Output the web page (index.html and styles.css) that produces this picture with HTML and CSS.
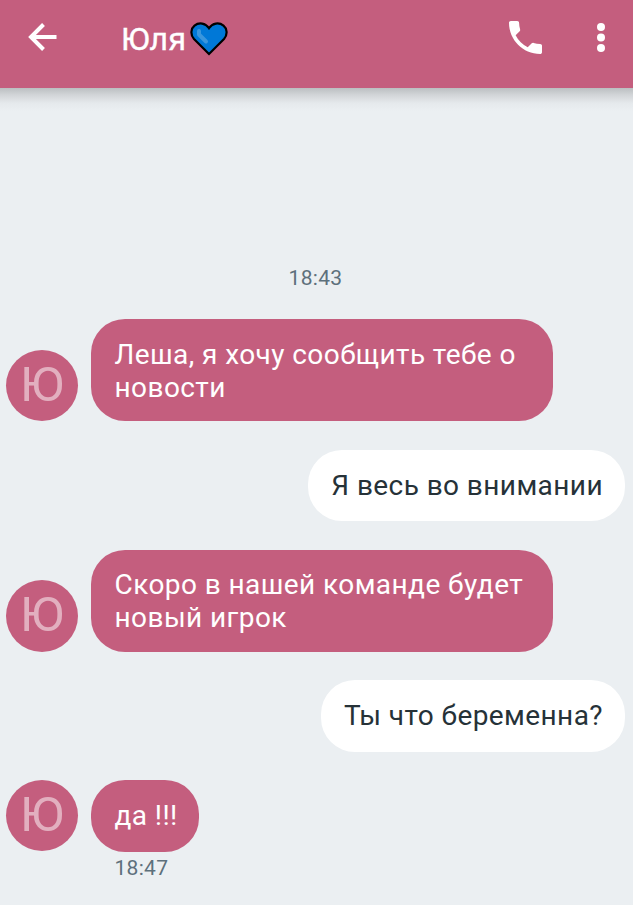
FILE: index.html
```html
<!DOCTYPE html>
<html lang="ru">
<head>
    <meta charset="UTF-8">
    <meta name="viewport" content="width=device-width, initial-scale=1.0">
    <title>Юля</title>
    <link rel="stylesheet" href="styles.css">
</head>
<body>
    <header class="header">
        <svg class="back" viewBox="0 0 30 30">
            <path d="M28.500 15H3M15.500 2.500L3 15l12.500 12.500" fill="none" stroke="#fff" stroke-width="4"/>
        </svg>
        <h1 class="name">Юля</h1>
        <svg class="heart" viewBox="0 0 38 34">
            <path d="M19 32L4 17C0 12.500 1 6.500 4.500 3.700C9 0 15.500 1 19 6.200C22.500 1 29 0 33.500 3.700C37 6.500 38 12.500 34 17Z" fill="#0078d7" stroke="#000" stroke-width="2.200"/>
            <path d="M9 9v3.500l7 7" fill="none" stroke="#3a96dd" stroke-width="4" stroke-linecap="round" stroke-linejoin="round"/>
        </svg>
        <svg class="phone" viewBox="3 3 18 18">
            <path fill="#fff" d="M6.620 10.790c1.440 2.830 3.760 5.140 6.590 6.590l2.200-2.200c.27-.27.67-.36 1.020-.24 1.120.37 2.330.57 3.570.57.55 0 1 .45 1 1V20c0 .55-.45 1-1 1-9.390 0-17-7.610-17-17 0-.55.45-1 1-1h3.500c.55 0 1 .45 1 1 0 1.250.2 2.450.57 3.570.11.35.03.74-.25 1.020l-2.200 2.200z"/>
        </svg>
        <svg class="more" viewBox="0 0 8 29">
            <g fill="#fff">
                <circle cx="4" cy="4" r="4"/>
                <circle cx="4" cy="14.500" r="4"/>
                <circle cx="4" cy="25" r="4"/>
            </g>
        </svg>
    </header>

    <main class="chat">
        <div class="date">18:43</div>
        <div class="row">
            <div class="avatar short">Ю</div>
            <div class="bubble in">Леша, я хочу сообщить тебе о новости</div>
        </div>
        <div class="row right">
            <div class="bubble out">Я весь во внимании</div>
        </div>
        <div class="row third">
            <div class="avatar">Ю</div>
            <div class="bubble in">Скоро в нашей команде будет новый игрок</div>
        </div>
        <div class="row right fourth">
            <div class="bubble out tall">Ты что беременна?</div>
        </div>
        <div class="row last">
            <div class="avatar short">Ю</div>
            <div class="bubble in tall">да !!!</div>
        </div>
        <div class="time">18:47</div>
    </main>
</body>
</html>
```
FILE: styles.css
```css
* {
    box-sizing: border-box;
}
body {
    margin: 0;
    height: 905px;
    overflow: hidden;
    background-color: #ebeff2;
    font-family: Roboto, sans-serif;
}
.header {
    display: flex;
    align-items: center;
    height: 88px;
    padding: 0 28px 14px;
    background-color: #c45e7e;
    color: #fff;
}
.back {
    width: 30px;
    height: 30px;
    margin-right: 63px;
}
.name {
    margin: 4px 0 0;
    font-size: 32px;
    font-weight: 400;
    line-height: 38px;
    letter-spacing: 0.3px;
    -webkit-text-stroke: 0.4px #fff;
}
.heart {
    width: 38px;
    height: 34px;
    margin: 3px 0 0 3.500px;
}
.phone {
    width: 33px;
    height: 33px;
    margin: 0 55px 0 auto;
}
.more {
    width: 8px;
    height: 29px;
}
.chat {
    height: 817px;
    padding: 176px 8px 0 6px;
    /* shadow under the header */
    background: linear-gradient(#bbbfc1, #d2d5d8 7px, #e5e9ec 15px, #ebeff2 23px);
}
.date,
.time {
    font-size: 21px;
    line-height: 28px;
    letter-spacing: 0.3px;
    color: #5d707c;
}
.date {
    text-align: center;
    margin-bottom: 27.2px;
}
.row {
    display: flex;
    align-items: flex-end;
    gap: 13px;
    margin-bottom: 28.8px;
}
.right {
    justify-content: flex-end;
}
.third {
    margin-bottom: 28.2px;
}
.fourth {
    margin-bottom: 28px;
}
.last {
    align-items: flex-start;
    margin-bottom: 2px;
}
.avatar {
    width: 72px;
    height: 72px;
    border-radius: 50%;
    background-color: #c45e7e;
    color: #e2afbf;
    font-size: 49px;
    line-height: 69px;
    text-align: center;
}
.short {
    height: 71px;
}
.bubble {
    min-height: 71px;
    max-width: 462px;
    padding: 18.400px 22px 17.600px 23.500px;
    border-radius: 34px;
    font-size: 28px;
    line-height: 33px;
    letter-spacing: 0.42px;
}
.tall {
    min-height: 72px;
}
.in {
    background-color: #c45e7e;
    color: #fff;
}
.last .in {
    padding-top: 19px;
    padding-right: 21px;
}
.out {
    padding-top: 18.600px;
    padding-left: 23px;
    background-color: #fff;
    color: #263238;
}
.time {
    padding-left: 108.500px;
}
```
